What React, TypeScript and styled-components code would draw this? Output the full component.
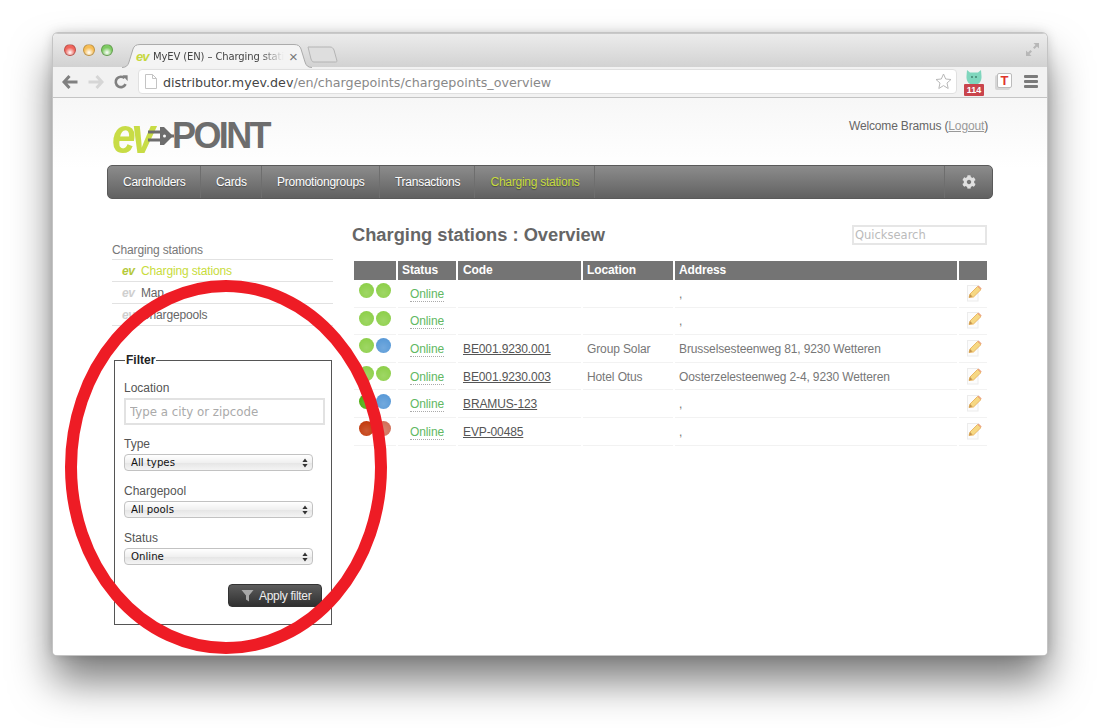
import { createGlobalStyle, styled } from 'styled-components';
import { FaCog } from 'react-icons/fa';

const GlobalStyle = createGlobalStyle`
  html, body {
    margin: 0;
    padding: 0;
    background: #fff;
  }
  body {
    width: 1100px;
    height: 728px;
    overflow: hidden;
    font-family: 'Liberation Sans', Arial, sans-serif;
  }
  * {
    box-sizing: border-box;
  }
`;

const navItems = ['Cardholders', 'Cards', 'Promotiongroups', 'Transactions', 'Charging stations'];

const sideItems = [
  { label: 'Charging stations', active: true },
  { label: 'Map', active: false },
  { label: 'Chargepools', active: false },
];

const stations = [
  { leds: ['#8fd04c', '#8fd04c'], code: '', location: '', address: ',' },
  { leds: ['#8fd04c', '#8fd04c'], code: '', location: '', address: ',' },
  { leds: ['#8fd04c', '#5b9bd8'], code: 'BE001.9230.001', location: 'Group Solar', address: 'Brusselsesteenweg 81, 9230 Wetteren' },
  { leds: ['#8fd04c', '#8fd04c'], code: 'BE001.9230.003', location: 'Hotel Otus', address: 'Oosterzelesteenweg 2-4, 9230 Wetteren' },
  { leds: ['#4fae12', '#5b9bd8'], code: 'BRAMUS-123', location: '', address: ',' },
  { leds: ['#c33d10', '#d27059'], code: 'EVP-00485', location: '', address: ',' },
];

const UpDown = () => (
  <SelectArrows width="6" height="10" viewBox="0 0 6 10">
    <path d="M3 0.5 L5.6 4 H0.4 Z M3 9.5 L5.6 6 H0.4 Z" fill="#333" />
  </SelectArrows>
);

const PencilIcon = () => (
  <svg width="15" height="17" viewBox="0 0 15 17">
    <rect x="0.5" y="0.5" width="10.5" height="15.5" fill="#fcfcfc" stroke="#ececec" />
    <path d="M2 12.5 L3 9 L10.5 1.5 L14 4.6 L6.5 12 Z" fill="#f6d883" stroke="#e6a94f" strokeWidth="0.8" />
    <path d="M2 12.5 L3 9 L5.5 11.5 Z" fill="#c49550" />
    <path d="M10.5 1.5 L11.6 0.6 L14.6 3.6 L14 4.6 Z" fill="#eba582" />
  </svg>
);

const App = () => {
  return (
    <>
      <GlobalStyle />
      <Stage>
        <Window>
          <TitleBar>
            <Lights>
              <Light $color="#f0655c" />
              <Light $color="#f6bd55" />
              <Light $color="#7ecb63" />
            </Lights>
            <Tab>
              <TabShape width="190" height="24" viewBox="0 0 190 24">
                <path
                  d="M0 23.5 C4 23.5 6 21.5 7 18 L11 5 C12 2 14 0.5 18 0.5 H172 C176 0.5 178 2 179 5 L183 18 C184 21.5 186 23.5 190 23.5"
                  fill="#f4f4f4"
                  stroke="#ababab"
                />
              </TabShape>
              <TabLogo>ev</TabLogo>
              <TabTitle>MyEV (EN) – Charging stati</TabTitle>
              <TabClose>×</TabClose>
            </Tab>
            <NewTab width="31" height="17" viewBox="0 0 31 17">
              <path d="M1 1 H23 C25 1 26 2 27 4 L30 15 C30 16 29 16 28 16 H7 C5 16 5 15 4 13 Z" fill="#dedede" stroke="#b4b4b4" />
            </NewTab>
            <Fullscreen width="15" height="15" viewBox="0 0 15 15">
              <path d="M8.5 1 H14 V6.5 L12 4.5 L9.5 7 L8 5.5 L10.5 3 Z M6.5 14 H1 V8.5 L3 10.5 L5.5 8 L7 9.5 L4.5 12 Z" fill="#b7b7b7" />
            </Fullscreen>
          </TitleBar>
          <ToolBar>
            <NavArrows>
              <svg width="16" height="14" viewBox="0 0 16 14">
                <path d="M7.5 1 L2 7 L7.5 13 M2.5 7 H15.5" fill="none" stroke="#808080" strokeWidth="3" />
              </svg>
              <svg width="16" height="14" viewBox="0 0 16 14">
                <path d="M8.5 1 L14 7 L8.5 13 M13.5 7 H0.5" fill="none" stroke="#d6d6d6" strokeWidth="3" />
              </svg>
              <svg width="14" height="14" viewBox="0 0 14 14">
                <path d="M11.6 9.2 A5.2 5.2 0 1 1 10.6 3.2" fill="none" stroke="#808080" strokeWidth="2.6" />
                <path d="M8.4 0.2 H13.6 V6 Z" fill="#808080" />
              </svg>
            </NavArrows>
            <Omnibox>
              <svg width="12" height="15" viewBox="0 0 12 15">
                <path d="M0.5 0.5 H7.5 L11.5 4.5 V14.5 H0.5 Z M7.5 0.5 V4.5 H11.5" fill="#fff" stroke="#c4c4c4" />
              </svg>
              <UrlText>
                <b>distributor.myev.dev</b>/en/chargepoints/chargepoints_overview
              </UrlText>
              <svg width="17" height="17" viewBox="0 0 17 17">
                <path
                  d="M8.5 1 L10.7 6 L16 6.5 L12 10 L13.2 15.5 L8.5 12.6 L3.8 15.5 L5 10 L1 6.5 L6.3 6 Z"
                  fill="#fff"
                  stroke="#b8b8b8"
                  strokeLinejoin="round"
                />
              </svg>
            </Omnibox>
            <Extensions>
              <BadgeIcon>
                <svg width="18" height="15" viewBox="0 0 18 15">
                  <path d="M2 0 L5 2.5 H13 L16 0 L16.5 6 C17 11 14 15 9 15 C4 15 1 11 1.5 6 Z" fill="#7fd6bd" />
                  <circle cx="7" cy="7" r="0.9" fill="#3d7a68" />
                  <circle cx="11" cy="7" r="0.9" fill="#3d7a68" />
                </svg>
                <BadgeCount>114</BadgeCount>
              </BadgeIcon>
              <TIcon>T</TIcon>
              <Hamburger>
                <span />
                <span />
                <span />
              </Hamburger>
            </Extensions>
          </ToolBar>
          <Page>
            <Header>
              <Logo>
                <LogoEv>ev</LogoEv>
                <LogoPlug width="26" height="26" viewBox="0 0 26 26">
                  <path d="M0 9 H13 M0 17 H13" stroke="#6d6d6d" strokeWidth="3" />
                  <path d="M12 4 H16 L25 13 L16 22 H12 Z" fill="#6d6d6d" />
                  <circle cx="16.5" cy="13" r="1.5" fill="#fafafa" />
                  <path d="M22 13 H26" stroke="#6d6d6d" strokeWidth="3" />
                </LogoPlug>
                <LogoPoint>POINT</LogoPoint>
              </Logo>
              <Welcome>
                Welcome Bramus (<a href="#logout">Logout</a>)
              </Welcome>
            </Header>
            <MainNav>
              {navItems.map((item, index) => (
                <NavItem key={item} $active={index === navItems.length - 1}>
                  {item}
                </NavItem>
              ))}
              <GearItem>
                <FaCog size={14} />
              </GearItem>
            </MainNav>
            <Columns>
              <Sidebar>
                <SideTitle>Charging stations</SideTitle>
                {sideItems.map((item) => (
                  <SideRow key={item.label} $active={item.active}>
                    <SideEv $active={item.active}>ev</SideEv>
                    {item.label}
                  </SideRow>
                ))}
                <Filter>
                  <FilterLegend>Filter</FilterLegend>
                  <FieldLabel>Location</FieldLabel>
                  <TextField placeholder="Type a city or zipcode" />
                  <FieldLabel $gap={11}>Type</FieldLabel>
                  <SelectWrap>
                    <SelectBox defaultValue="All types">
                      <option>All types</option>
                    </SelectBox>
                    <UpDown />
                  </SelectWrap>
                  <FieldLabel $gap={12}>Chargepool</FieldLabel>
                  <SelectWrap>
                    <SelectBox defaultValue="All pools">
                      <option>All pools</option>
                    </SelectBox>
                    <UpDown />
                  </SelectWrap>
                  <FieldLabel $gap={12}>Status</FieldLabel>
                  <SelectWrap>
                    <SelectBox defaultValue="Online">
                      <option>Online</option>
                    </SelectBox>
                    <UpDown />
                  </SelectWrap>
                  <ButtonRow>
                    <ApplyButton type="button">
                      <svg width="13" height="13" viewBox="0 0 13 13">
                        <path d="M0.5 1 H12.5 L8 6.5 V12.5 L5 10.5 V6.5 Z" fill="#a8a8a8" />
                      </svg>
                      Apply filter
                    </ApplyButton>
                  </ButtonRow>
                </Filter>
              </Sidebar>
              <Main>
                <TitleRow>
                  <Title>Charging stations : Overview</Title>
                  <QuickSearch placeholder="Quicksearch" />
                </TitleRow>
                <Table>
                  <thead>
                    <tr>
                      <HeadCell $width={42} />
                      <HeadCell $width={58}>Status</HeadCell>
                      <CodeHead $width={123}>Code</CodeHead>
                      <HeadCell $width={90}>Location</HeadCell>
                      <HeadCell $width={282}>Address</HeadCell>
                      <HeadCell $width={28} />
                    </tr>
                  </thead>
                  <tbody>
                    {stations.map((station, index) => (
                      <tr key={index}>
                        <LedCell>
                          <Leds>
                            <Led $color={station.leds[0]} />
                            <Led $color={station.leds[1]} />
                          </Leds>
                        </LedCell>
                        <StatusCell>
                          <StatusText>Online</StatusText>
                        </StatusCell>
                        <CodeCell>{station.code && <a href="#code">{station.code}</a>}</CodeCell>
                        <Cell>{station.location}</Cell>
                        <Cell>{station.address}</Cell>
                        <EditCell>
                          <PencilIcon />
                        </EditCell>
                      </tr>
                    ))}
                  </tbody>
                </Table>
              </Main>
            </Columns>
          </Page>
        </Window>
        <Highlight width="1100" height="728" viewBox="0 0 1100 728">
          <ellipse cx="226" cy="467" rx="155" ry="181" fill="none" stroke="#ee1c25" strokeWidth="12" />
        </Highlight>
      </Stage>
    </>
  );
};

export default App;

const Stage = styled.div`
  position: relative;
  width: 1100px;
  height: 728px;
  padding: 33px 53px 0;
`;

const Window = styled.div`
  width: 994px;
  height: 622px;
  border-radius: 5px 5px 4px 4px;
  overflow: hidden;
  background: #fff;
  box-shadow: 0 0 0 1px #c4c4c4, 0 26px 42px rgba(0, 0, 0, 0.52), 0 0 12px rgba(0, 0, 0, 0.18);
`;

const TitleBar = styled.div`
  position: relative;
  height: 34px;
  display: flex;
  align-items: flex-end;
  padding-left: 11px;
  background: linear-gradient(#ececec, #d2d2d2);
  border-top: 1px solid #c9c9c9;
`;

const Lights = styled.div`
  display: flex;
  gap: 6.5px;
  align-self: flex-start;
  margin-top: 10px;
`;

const Light = styled.span<{ $color: string }>`
  width: 12px;
  height: 12px;
  border-radius: 50%;
  border: 1px solid rgba(0, 0, 0, 0.22);
  background: radial-gradient(circle at 50% 75%, #fff 0%, ${({ $color }) => $color} 55%);
`;

const Tab = styled.div`
  position: relative;
  width: 190px;
  height: 24px;
  margin-left: 9px;
  margin-bottom: -1px;
  padding: 0 0 0 14px;
  display: flex;
  align-items: center;
  gap: 3px;
`;

const TabShape = styled.svg`
  position: absolute;
  left: 0;
  top: 0;
`;

const TabLogo = styled.span`
  position: relative;
  width: 14px;
  font: italic bold 13px 'Liberation Sans', sans-serif;
  letter-spacing: -1px;
  color: #c6d83f;
`;

const TabTitle = styled.span`
  position: relative;
  white-space: nowrap;
  font: 10px 'DejaVu Sans', sans-serif;
  letter-spacing: -0.12px;
  color: #444;
  mask-image: linear-gradient(to right, #000 82%, transparent);
`;

const TabClose = styled.span`
  position: relative;
  margin-left: 2px;
  font: 15px 'Liberation Sans', sans-serif;
  color: #777;
`;

const NewTab = styled.svg`
  margin-left: -5px;
  margin-bottom: 4px;
`;

const Fullscreen = styled.svg`
  position: absolute;
  top: 8px;
  right: 7px;
`;

const ToolBar = styled.div`
  height: 31px;
  display: flex;
  align-items: flex-start;
  padding: 2px 9px 0 9px;
  background: #f2f2f2;
  border-bottom: 1px solid #c4c4c4;
`;

const NavArrows = styled.div`
  width: 76px;
  display: flex;
  align-items: center;
  gap: 10px;
  height: 25px;
`;

const Omnibox = styled.div`
  width: 819px;
  height: 25px;
  display: flex;
  align-items: center;
  padding: 0 4px 0 6px;
  background: #fff;
  border: 1px solid #e0e0e0;
  border-radius: 4px;
`;

const UrlText = styled.div`
  flex: 1;
  padding: 1px 0 0 6px;
  font: 12.7px 'DejaVu Sans', sans-serif;
  color: #888;
  white-space: nowrap;

  b {
    font-weight: normal;
    color: #444;
  }
`;

const Extensions = styled.div`
  height: 25px;
  display: flex;
  align-items: center;
  margin-left: 7px;
`;

const BadgeIcon = styled.div`
  position: relative;
  width: 20px;
  height: 25px;
  padding: 1px 0 0 1px;
`;

const BadgeCount = styled.span`
  position: absolute;
  left: 0;
  bottom: -2px;
  width: 20px;
  height: 12px;
  border-radius: 1px;
  background: #c9444c;
  color: #fff;
  font: bold 9px/12px 'Liberation Sans', sans-serif;
  text-align: center;
`;

const TIcon = styled.div`
  width: 15px;
  height: 15px;
  margin-left: 13px;
  margin-top: -2px;
  border: 1px solid #bcbcbc;
  border-radius: 2px;
  box-shadow: -2px 2px 0 #d6d6d6;
  background: #fff;
  color: #e0352b;
  font: bold 13px/13px 'Liberation Sans', sans-serif;
  text-align: center;
`;

const Hamburger = styled.div`
  width: 14px;
  margin-left: 12px;
  display: flex;
  flex-direction: column;
  gap: 2px;

  span {
    height: 3px;
    background: #7b7b7b;
    border-radius: 1px;
  }
`;

const Page = styled.div`
  height: 557px;
  padding: 0 54px;
  background: linear-gradient(#f7f7f7, #fff 70px);
  color: #666;
`;

const Header = styled.div`
  height: 67px;
  display: flex;
  justify-content: space-between;
  padding: 20px 5px 0;
`;

const Logo = styled.div`
  height: 36px;
  display: flex;
  align-items: center;
`;

const LogoEv = styled.span`
  width: 38px;
  display: inline-block;
  font: italic bold 50px/36px 'Liberation Sans', sans-serif;
  letter-spacing: -5px;
  color: #c8dc46;
  transform: scaleX(0.85);
  transform-origin: left center;
`;

const LogoPlug = styled.svg`
  position: relative;
  margin-left: -2px;
`;

const LogoPoint = styled.span`
  margin-left: -2px;
  font: bold 36px/36px 'Liberation Sans', sans-serif;
  letter-spacing: -2.6px;
  color: #6d6d6d;
`;

const Welcome = styled.div`
  margin-top: -3px;
  font-size: 12px;
  letter-spacing: -0.15px;
  line-height: 14px;
  padding-top: 4px;
  color: #666;

  a {
    color: #999;
  }
`;

const MainNav = styled.nav`
  height: 34px;
  display: flex;
  border: 1px solid #5a5a5a;
  border-radius: 5px;
  background: linear-gradient(#8c8c8c, #616161);
  overflow: hidden;
`;

const NavItem = styled.div<{ $active?: boolean }>`
  padding: 0 14.3px 0 15px;
  display: flex;
  align-items: center;
  font-size: 12px;
  letter-spacing: -0.25px;
  color: ${({ $active }) => ($active ? '#c8dc3c' : '#fff')};
  text-shadow: 0 1px 1px rgba(0, 0, 0, 0.35);
  border-right: 1px solid #6e6e6e;
`;

const GearItem = styled.div`
  width: 48px;
  margin-left: auto;
  display: flex;
  align-items: center;
  justify-content: center;
  color: #e0e0e0;
  border-left: 1px solid #6e6e6e;
`;

const Columns = styled.div`
  display: flex;
  gap: 19px;
  padding-left: 5px;
`;

const Sidebar = styled.aside`
  width: 221px;
  padding-top: 44px;
`;

const SideTitle = styled.div`
  height: 17px;
  font-size: 12px;
  letter-spacing: -0.15px;
  line-height: 14px;
  border-bottom: 1px solid #e2e2e2;
  color: #777;
`;

const SideRow = styled.div<{ $active: boolean }>`
  height: 22px;
  display: flex;
  align-items: center;
  padding-left: 10px;
  font-size: 12px;
  letter-spacing: -0.15px;
  color: ${({ $active }) => ($active ? '#c8dc3c' : '#666')};
  border-bottom: 1px solid #e2e2e2;
`;

const SideEv = styled.span<{ $active: boolean }>`
  width: 19px;
  font: italic bold 12px 'Liberation Sans', sans-serif;
  letter-spacing: -0.5px;
  color: ${({ $active }) => ($active ? '#b5c93a' : '#cfcfcf')};
`;

const Filter = styled.fieldset`
  width: 218px;
  height: 272px;
  margin: 27px 0 0 2px;
  padding: 0 5px 0 9px;
  border: 1px solid #555;
`;

const FilterLegend = styled.legend`
  margin-left: 1px;
  padding: 0 1px;
  font-size: 12px;
  font-weight: bold;
  color: #222;
`;

const FieldLabel = styled.div<{ $gap?: number }>`
  margin-top: ${({ $gap }) => $gap ?? 13}px;
  height: 15px;
  margin-bottom: 3px;
  font-size: 12px;
  line-height: 17px;
  color: #555;
`;

const TextField = styled.input`
  display: block;
  width: 201px;
  height: 27px;
  padding: 0 4px;
  border: 2px solid #e2e2e2;
  background: #fff;
  font: 11.8px 'DejaVu Sans', sans-serif;
  outline: none;

  &::placeholder {
    color: #aaa;
  }
`;

const SelectWrap = styled.div`
  position: relative;
  width: 189px;
  height: 17px;
`;

const SelectBox = styled.select`
  appearance: none;
  display: block;
  width: 100%;
  height: 100%;
  padding: 0 6px;
  border: 1px solid #c2c2c2;
  border-radius: 4px;
  background: linear-gradient(#fff, #f0f0f0 50%, #e6e6e6 55%, #f4f4f4);
  font: 10.2px 'DejaVu Sans', sans-serif;
  color: #111;
`;

const SelectArrows = styled.svg`
  position: absolute;
  right: 5px;
  top: 4px;
`;

const ButtonRow = styled.div`
  display: flex;
  justify-content: flex-end;
  margin-top: 19px;
  padding-right: 4px;
`;

const ApplyButton = styled.button`
  width: 94px;
  height: 23px;
  display: flex;
  align-items: center;
  gap: 5px;
  padding: 0 0 0 12px;
  border: 1px solid #333;
  border-radius: 4px;
  background: linear-gradient(#5c5c5c, #303030);
  color: #eee;
  font: 12px 'Liberation Sans', sans-serif;
  letter-spacing: -0.3px;
`;

const Main = styled.main`
  width: 635px;
`;

const TitleRow = styled.div`
  height: 62px;
  padding-top: 26px;
  display: flex;
  justify-content: space-between;
  align-items: flex-start;
`;

const Title = styled.h1`
  margin: 0;
  font-size: 18.3px;
  line-height: 20px;
  color: #666;
`;

const QuickSearch = styled.input`
  width: 135px;
  height: 20px;
  padding: 0 1px;
  border: 2px solid #e6e6e6;
  font: 11.5px 'DejaVu Sans', sans-serif;
  outline: none;

  &::placeholder {
    color: #bbb;
  }
`;

const Table = styled.table`
  width: 637px;
  table-layout: fixed;
  border-collapse: separate;
  border-spacing: 2px 0;
  font-size: 12px;
  letter-spacing: -0.12px;
`;

const HeadCell = styled.th<{ $width: number }>`
  width: ${({ $width }) => $width}px;
  height: 19px;
  padding: 0 0 1px 4px;
  background: #747474;
  color: #fff;
  font-size: 12px;
  text-align: left;
`;

const CodeHead = styled(HeadCell)`
  padding-left: 5px;
`;

const Cell = styled.td`
  height: 27.6px;
  padding: 1px 0 0 4px;
  border-bottom: 1px solid #f2f2f2;
  color: #777;
  white-space: nowrap;

  a {
    color: #555;
  }
`;

const CodeCell = styled(Cell)`
  padding-left: 5px;
`;

const LedCell = styled(Cell)`
  padding: 0 0 5px 5px;
`;

const Leds = styled.div`
  display: flex;
  gap: 2px;
`;

const Led = styled.span<{ $color: string }>`
  width: 15px;
  height: 15px;
  border-radius: 50%;
  background: radial-gradient(circle at 50% 65%, rgba(255, 255, 255, 0.14), rgba(255, 255, 255, 0) 70%),
    ${({ $color }) => $color};
`;

const StatusCell = styled(Cell)`
  padding: 1px 0 0;
  text-align: center;
`;

const StatusText = styled.span`
  color: #62b862;
  border-bottom: 1px dotted #aaa;
`;

const EditCell = styled(Cell)`
  padding: 0 0 0 8px;

  svg {
    display: block;
  }
`;

const Highlight = styled.svg`
  position: absolute;
  left: 0;
  top: 0;
  pointer-events: none;
`;
